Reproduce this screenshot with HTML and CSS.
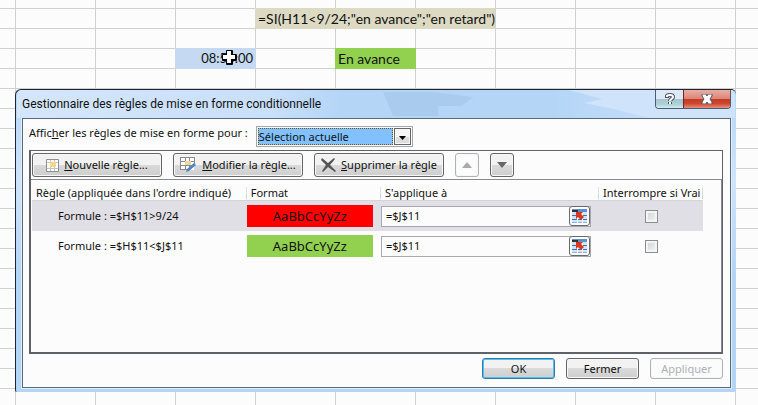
FILE: index.html
```html
<!DOCTYPE html>
<html lang="fr">
<head>
<meta charset="utf-8">
<title>Gestionnaire des règles de mise en forme conditionnelle</title>
<link rel="stylesheet" href="styles.css">
</head>
<body>
<main class="sheet">
  <div class="cell cell-formula">=SI(H11&lt;9/24;"en avance";"en retard")</div>
  <div class="cell cell-time">08:50:00
    <svg class="cursor" width="16" height="16" viewBox="0 0 16 16" aria-hidden="true"><path d="M5 1h5v4h4v5h-4v4H5v-4H1V5h4z" fill="#000" stroke="#000" stroke-width="2" stroke-linejoin="round"/><path d="M5 1h4v4h4v4H9v4H5V9H1V5h4z" fill="#fff"/></svg>
  </div>
  <div class="cell cell-result">En avance</div>

  <section class="dialog" role="dialog" aria-labelledby="dialog-title">
    <header class="titlebar">
      <svg class="reflection" viewBox="0 0 350 28" preserveAspectRatio="none" aria-hidden="true"><path d="M0 2h50l40 5-12 9H55v10H10z" fill="#a9cbed"/><path d="M185 0h165v28H265l-35-9-30-6 18-4z" fill="#cfe3fa"/></svg>
      <h1 id="dialog-title">Gestionnaire des règles de mise en forme conditionnelle</h1>
      <div class="window-buttons">
        <button class="win-help" aria-label="Aide"><svg width="10" height="13" viewBox="0 0 10 13"><path d="M2 5V3q0-1 3-1t3 2q0 1-1.500 2T5 8M5 9v2" fill="none" stroke="#4b5560" stroke-width="4"/><path d="M2 4V3q0-1 3-1t3 2q0 1-1.500 2T5 8M5 9v2" fill="none" stroke="#fff" stroke-width="2"/></svg></button>
        <button class="win-close" aria-label="Fermer la fenêtre"><svg width="12" height="10" viewBox="0 0 12 10"><path d="M1 0h4l1 2 1-2h4v2L9 5l2 3v2H7L6 8l-1 2H1V8l2-3-2-3z" fill="#fff" stroke="#4b5560"/></svg></button>
      </div>
    </header>
    <div class="content">
      <div class="scope">
        <label for="scope">Affic<u>h</u>er les règles de mise en forme pour :</label>
        <span class="select-box"><select id="scope"><option>Sélection actuelle</option></select><svg width="17" height="17" viewBox="0 0 17 17" aria-hidden="true"><rect x=".5" y=".5" width="16" height="16" fill="#f6f6f6" stroke="#666"/><path d="M2 9h13v6H2z" fill="#ddd"/><path d="M5 8h7l-3.500 4z" fill="#000"/></svg></span>
      </div>
      <div class="rules">
        <div class="toolbar">
          <button class="btn tool"><svg width="13" height="13" viewBox="0 0 13 13" aria-hidden="true"><path fill="#fff" stroke="#8f8f8f" d="M.5 .5h12v12H.5z"/><path d="M4.500 1v11M8.500 1v11M1 3.500h11M1 9.500h11" stroke="#c4c4c4"/><path fill="#f6d48b" d="M4 3h6v5H4z"/></svg><span><u>N</u>ouvelle règle...</span></button>
          <button class="btn tool"><svg width="17" height="16" viewBox="0 0 17 16" aria-hidden="true"><path fill="#fff" d="M0 0h14v13H0z"/><path d="M.5 0v13M5.500 0v13M9.500 0v13M14.500 0v8M0 .5h15M0 4.500h15M0 8.500h12M0 12.500h8" stroke="#8b8b8b" fill="none"/><path fill="#f3d79e" d="M5 4h6v4H5z"/><path d="M14 6l2 2-7 6-3 1 1-3z" fill="#4a86c5"/></svg><span><u>M</u>odifier la règle...</span></button>
          <button class="btn tool"><svg width="15" height="14" viewBox="0 0 15 14" aria-hidden="true"><path d="M1 0l6 5 6-5 1 1-5 6 6 6-1 1-7-5-5 5-1-1 4-6-5-5z" fill="#555"/></svg><span><u>S</u>upprimer la règle</span></button>
          <button class="btn arrow" disabled aria-label="Monter"><svg width="10" height="6" viewBox="0 0 10 6"><path d="M0 6l5-6 5 6z" fill="#aaa"/></svg></button>
          <button class="btn arrow" aria-label="Descendre"><svg width="10" height="6" viewBox="0 0 10 6"><path d="M0 0h10L5 6z" fill="#666"/></svg></button>
        </div>
        <div class="list">
        <table>
          <colgroup><col class="c-rule"><col class="c-format"><col class="c-range"><col class="c-stop"></colgroup>
          <thead><tr><th>Règle (appliquée dans l'ordre indiqué)</th><th>Format</th><th>S'applique à</th><th>Interrompre si Vrai</th></tr></thead>
          <tbody>
            <tr class="selected">
              <td class="rule">Formule : =$H$11&gt;9/24</td>
              <td><div class="sample red">AaBbCcYyZz</div></td>
              <td><div class="range"><input type="text" value="=$J$11" aria-label="Plage de la règle 1"><button aria-label="Choisir la plage"><svg width="15" height="14" viewBox="0 0 15 14"><path fill="#d3e4f5" d="M0 0h15v14H0z"/><path fill="#5b8fd0" d="M0 0h15v3H0z"/><path fill="#333" d="M0 1h6v2H0z"/><path d="M0 6.500h15M0 10.500h15" stroke="#3f73b8"/><path d="M0 13.500h15" stroke="#8cb2de"/><path d="M5.500 4v10M10.500 4v10" stroke="#fff"/><path d="M4 3h7L9 5l3 3-3 3-3-3-2 2z" fill="#d9381e"/></svg></button></div></td>
              <td class="stop"><input type="checkbox" aria-label="Interrompre si vrai, règle 1"></td>
            </tr>
            <tr>
              <td class="rule">Formule : =$H$11&lt;$J$11</td>
              <td><div class="sample green">AaBbCcYyZz</div></td>
              <td><div class="range"><input type="text" value="=$J$11" aria-label="Plage de la règle 2"><button aria-label="Choisir la plage"><svg width="15" height="14" viewBox="0 0 15 14"><path fill="#d3e4f5" d="M0 0h15v14H0z"/><path fill="#5b8fd0" d="M0 0h15v3H0z"/><path fill="#333" d="M0 1h6v2H0z"/><path d="M0 6.500h15M0 10.500h15" stroke="#3f73b8"/><path d="M0 13.500h15" stroke="#8cb2de"/><path d="M5.500 4v10M10.500 4v10" stroke="#fff"/><path d="M4 3h7L9 5l3 3-3 3-3-3-2 2z" fill="#d9381e"/></svg></button></div></td>
              <td class="stop"><input type="checkbox" aria-label="Interrompre si vrai, règle 2"></td>
            </tr>
          </tbody>
        </table>
        </div>
      </div>
      <footer>
        <button class="btn action primary">OK</button>
        <button class="btn action">Fermer</button>
        <button class="btn action" disabled>Appliquer</button>
      </footer>
    </div>
  </section>
</main>
</body>
</html>
```
FILE: styles.css
```css
* { box-sizing: border-box; }
body { margin: 0; background: #fcfcfc; color: #111; font: 11px/16px "Noto Sans", "Open Sans", sans-serif; }
button, input, select { font: inherit; color: inherit; margin: 0; padding: 0; }
button svg { flex: none; display: block; }

/* Spreadsheet: 80 x 20 cells */
.sheet {
  position: relative;
  min-height: 100vh;
  padding: 9px 0 0 15px;
  display: grid;
  grid-template-columns: repeat(auto-fill, 80px);
  grid-auto-rows: 20px;
  background-image: linear-gradient(90deg, #d0d0d0 1px, transparent 1px), linear-gradient(#d0d0d0 1px, transparent 1px);
  background-size: 80px 20px;
  background-position: 15px 8px;
  overflow: hidden;
}
.cell { font: 14px/21px Lato, sans-serif; height: 21px; margin-top: -1px; white-space: nowrap; padding: 0 3px; }
.cell-formula { grid-column: 4 / 7; grid-row: 1; background: #dddac3; }
.cell-time { grid-column: 3; grid-row: 3; background: #c5daf2; text-align: right; position: relative; margin-right: -1px; font-size: 13px; }
.cell-result { grid-column: 5; grid-row: 3; background: #92d050; margin-right: -1px; }
.cursor { position: absolute; left: 47px; top: 2px; }

/* Window */
.dialog {
  position: absolute;
  left: 15px; right: 22px; top: 89px;
  padding: 0 5px 4px 6px;
  border-top: 1px solid #1c2530;
  border-left: 1px solid #1c2530;
  border-radius: 6px 5px 2px 2px;
  background: linear-gradient(#b5d5f7, #cfe4fb 30%, #b5d5f7 60%);
}
.titlebar { position: relative; display: flex; justify-content: space-between; height: 28px; overflow: hidden; background: linear-gradient(90deg, #d4e6fb, #c9e0fa 35%, #b5d5f7 45%, #b5d5f7 75%, #d0e4fb); margin: 0 -4px 0 -5px; padding: 0 4px 0 5px; border-radius: 5px 5px 0 0; }
.titlebar h1 { position: relative; margin: 0; font: 400 12px/28px Roboto, sans-serif; white-space: nowrap; }
.reflection { position: absolute; right: 0; top: 0; width: 49%; height: 28px; }
.window-buttons { position: relative; display: flex; height: 19px; border: 1px solid #4d5b6b; border-top: 0; border-radius: 0 0 4px 4px; overflow: hidden; }
.window-buttons button { display: flex; align-items: center; justify-content: center; border: 0; }
.win-help { width: 27px; background: linear-gradient(#dce9f7 50%, #aebfd1 50%, #a9d5d5 80%, #d9e9f5); }
.win-close { width: 47px; background: linear-gradient(#e9ada3, #dc8577 49%, #c43a22 50%, #cc4630 75%, #e8907f); box-shadow: inset 1px 0 #76231a; }
.content { background: #fcfcfc; border: 1px solid #596b79; box-shadow: 0 0 0 1px #e0eefb; padding: 7px 7px 8px 6px; }

.scope { display: flex; align-items: center; gap: 8px; height: 20px; margin-bottom: 4px; }
.scope label { padding-bottom: 6px; }
.select-box { width: 157px; height: 21px; display: flex; padding: 1px; border: 1px solid #a3a6ad; align-items: center; }
.select-box select { appearance: none; flex: 1; min-width: 0; height: 17px; margin-right: 1px; border: 1px dotted #76501f; border-radius: 0; background: #82c1ff; line-height: 15px; }

.rules { display: flex; flex-direction: column; min-height: 204px; border: 1px solid #5f6268; border-left-width: 2px; border-right-width: 1px; border-bottom-width: 2px; }
.toolbar { display: flex; gap: 11px; padding: 2px 1px 2px; }
.btn { display: flex; align-items: center; justify-content: center; border: 1px solid #666; border-radius: 3px; box-shadow: inset 0 0 0 1px #f7f7f7; background: linear-gradient(#f2f2f2 50%, #dadada 50%, #cecece); white-space: nowrap; }
.btn:disabled { border-color: #adb2b5; color: #a9b0b5; background: #fcfcfc; }
.tool { width: 130px; height: 24px; gap: 5px; }
.arrow { width: 24px; height: 24px; }
.list { flex: 1; border-top: 1px solid #888993; border-right: 1px solid #888993; padding: 0 18px 0 1px; }

table { width: 100%; table-layout: fixed; border-collapse: separate; border-spacing: 0; }
.c-rule { width: 32%; }
.c-format { width: 20%; }
th { height: 21px; padding: 4px 0 0 4px; text-align: left; font-weight: 400; line-height: 15px; white-space: nowrap; border-bottom: 1px solid #d4d4d8; background: linear-gradient(#e5e5ea, #b9d5f0) right 0 top 7px / 1px 12px no-repeat; }
td { height: 30px; padding: 0; }
.selected td { background: #e0dfe5; }
.c-stop { width: 104px; }
.rule { text-indent: 26px; white-space: nowrap; }
.sample { height: 22px; margin: 0 8px 0 0; text-align: center; font-size: 13px; line-height: 22px; }
.red { background: #f00; }
.green { background: #92d050; }
.range { height: 21px; margin: 0 8px 0 0; display: flex; align-items: center; border: 1px solid #a7a7af; background: #fcfcfc; }
.range input { flex: 1; min-width: 0; border: 0; padding-left: 4px; background: transparent; outline: 0; }
.range button { width: 21px; height: 20px; display: flex; align-items: center; justify-content: center; border: 1px solid #69696d; border-radius: 3px; background: #fff; }
.stop { text-align: center; line-height: 0; }
.stop input { appearance: none; width: 13px; height: 13px; border: 1px solid #8d8e91; background: linear-gradient(135deg, #cdd0d4, #f7f7f7); box-shadow: inset 0 0 0 2px #f4f4f4; }

footer { display: flex; justify-content: flex-end; gap: 11px; margin-top: 4px; }
.action { width: 73px; height: 21px; }
.primary { border-color: #3178ab; box-shadow: inset 0 0 0 1px #4ec3f0; }
```
